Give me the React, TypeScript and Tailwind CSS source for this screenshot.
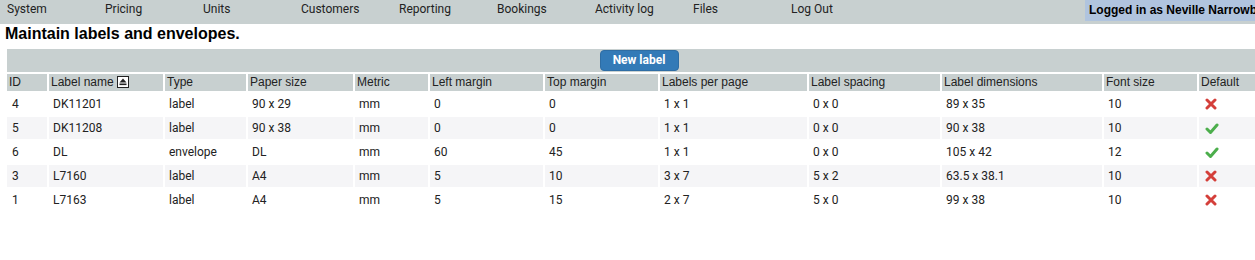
const navItems = ['System', 'Pricing', 'Units', 'Customers', 'Reporting', 'Bookings', 'Activity log', 'Files', 'Log Out'];

const columns = [
  { title: 'ID', w: 'w-[40px]' },
  { title: 'Label name', w: 'w-[114px]', sort: true },
  { title: 'Type', w: 'w-[81px]' },
  { title: 'Paper size', w: 'w-[105px]' },
  { title: 'Metric', w: 'w-[73px]' },
  { title: 'Left margin', w: 'w-[113px]' },
  { title: 'Top margin', w: 'w-[113px]' },
  { title: 'Labels per page', w: 'w-[147px]' },
  { title: 'Label spacing', w: 'w-[131px]' },
  { title: 'Label dimensions', w: 'w-[160px]' },
  { title: 'Font size', w: 'w-[93px]' },
  { title: 'Default', w: 'w-[72px]' },
];

type Row = [string, string, string, string, string, string, string, string, string, string, string, boolean];

const rows: Row[] = [
  ['4', 'DK11201', 'label', '90 x 29', 'mm', '0', '0', '1 x 1', '0 x 0', '89 x 35', '10', false],
  ['5', 'DK11208', 'label', '90 x 38', 'mm', '0', '0', '1 x 1', '0 x 0', '90 x 38', '10', true],
  ['6', 'DL', 'envelope', 'DL', 'mm', '60', '45', '1 x 1', '0 x 0', '105 x 42', '12', true],
  ['3', 'L7160', 'label', 'A4', 'mm', '5', '10', '3 x 7', '5 x 2', '63.5 x 38.1', '10', false],
  ['1', 'L7163', 'label', 'A4', 'mm', '5', '15', '2 x 7', '5 x 0', '99 x 38', '10', false],
];

function SortIcon() {
  return (
    <svg width="12" height="12" viewBox="0 0 12 12" className="inline-block ml-[3px] -mt-[2px] align-middle">
      <rect x="0.5" y="0.5" width="11" height="11" fill="#fff" stroke="#222" />
      <path d="M6 2.5 L9.5 6.5 H2.5 Z" fill="#222" />
      <rect x="2.5" y="7.5" width="7" height="1.6" fill="#222" />
    </svg>
  );
}

function Cross() {
  return (
    <svg width="12" height="12" viewBox="0 0 12 12">
      <path d="M2 2 L10 10 M10 2 L2 10" stroke="#d43f3a" strokeWidth="3" strokeLinecap="round" />
    </svg>
  );
}

function Check() {
  return (
    <svg width="14" height="13" viewBox="0 0 14 13">
      <path d="M2 7 L5.5 10.5 L12 3" stroke="#4cae4c" strokeWidth="3" fill="none" strokeLinecap="round" strokeLinejoin="round" />
    </svg>
  );
}

export default function App() {
  return (
    <div className="w-[1255px] overflow-hidden bg-white text-[#222] font-['Roboto',sans-serif]">
      <div className="flex h-[24px] bg-[#c8d0d0]">
        <div className="flex pl-[7px]">
          {navItems.map((item) => (
            <div key={item} className="w-[98px] pt-[1px] text-[12px] leading-[16px]">{item}</div>
          ))}
        </div>
        <div className="ml-auto h-[21px] w-[170px] shrink-0 overflow-hidden whitespace-nowrap bg-[#b0c4de] pl-[4px] pt-[3px] text-[12px] leading-[15px] font-bold font-['Liberation_Sans',Arial,sans-serif] text-black">
          Logged in as Neville Narrowb
        </div>
      </div>

      <div className="h-[23px] pl-[5px] pt-[1px] text-[16px] leading-[18px] font-bold font-['Liberation_Sans',Arial,sans-serif] text-black">
        Maintain labels and envelopes.
      </div>

      <table className="ml-[5px] w-[1268px] table-fixed border-separate border-spacing-[2px] text-[12px]">
        <colgroup>
          {columns.map((c) => (
            <col key={c.title} className={c.w} />
          ))}
        </colgroup>
        <thead>
          <tr>
            <th colSpan={12} className="h-[23px] bg-[#c8d0d0] p-0 text-center">
              <button className="h-[21px] w-[79px] rounded-[4px] border border-[#2e6da4] bg-[#337ab7] text-[12px] leading-[19px] text-white">
                New label
              </button>
            </th>
          </tr>
          <tr>
            {columns.map((c) => (
              <th
                key={c.title}
                className="h-[17px] whitespace-nowrap bg-[#c8d0d0] pl-[2px] text-left font-normal leading-[15px] font-['Liberation_Sans',Arial,sans-serif]"
              >
                {c.title}
                {c.sort && <SortIcon />}
              </th>
            ))}
          </tr>
        </thead>
        <tbody>
          {rows.map((r, i) => (
            <tr key={r[0]} className={i % 2 === 1 ? 'bg-[#f5f5f7]' : 'bg-white'}>
              {r.slice(0, 11).map((v, j) => (
                <td key={j} className={`h-[22px] whitespace-nowrap leading-[14px] ${j === 0 ? 'pl-[5px]' : 'pl-[4px]'}`}>
                  {v as string}
                </td>
              ))}
              <td className="h-[22px] pl-[6px] align-middle">
                <div className="flex items-center">{r[11] ? <Check /> : <Cross />}</div>
              </td>
            </tr>
          ))}
        </tbody>
      </table>
    </div>
  );
}
